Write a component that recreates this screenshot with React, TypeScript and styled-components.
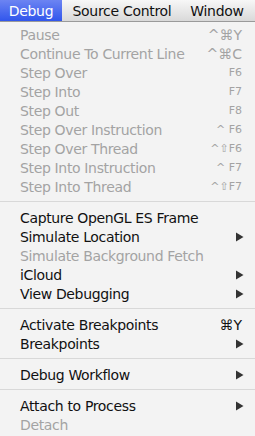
import React from "react";
import styled, { createGlobalStyle } from "styled-components";

const Global = createGlobalStyle`
  html, body { margin: 0; padding: 0; background: #f4f4f4; }
  body { font-family: "DejaVu Sans", "Liberation Sans", sans-serif; }
`;

const Wrap = styled.div`
  width: 255px;
  height: 436px;
  overflow: hidden;
  background: #f3f3f3;
  display: flex;
  flex-direction: column;
`;

const MenuBar = styled.div`
  height: 22px;
  display: flex;
  align-items: stretch;
  background: linear-gradient(#f7f7f7, #d9d9d9);
  border-bottom: 1px solid #9a9a9a;
  box-sizing: border-box;
`;

const BarItem = styled.div<{ $active?: boolean; $w: number }>`
  width: ${(p) => p.$w}px;
  display: flex;
  align-items: center;
  justify-content: center;
  font-size: 14px;
  letter-spacing: -0.3px;
  color: ${(p) => (p.$active ? "#fff" : "#111")};
  background: ${(p) => (p.$active ? "linear-gradient(#6c84f2, #3156ec)" : "transparent")};
`;

const Menu = styled.div`
  display: flex;
  flex-direction: column;
  padding-top: 3px;
`;

const Row = styled.div<{ $disabled?: boolean }>`
  height: 19px;
  display: flex;
  align-items: center;
  padding: 0 11px 0 20px;
  font-size: 14px;
  letter-spacing: -0.35px;
  color: ${(p) => (p.$disabled ? "#a3a3a3" : "#111")};
`;

const Label = styled.span`
  flex: 1;
  white-space: nowrap;
`;

const Shortcut = styled.span<{ $small?: boolean }>`
  font-size: ${(p) => (p.$small ? "11px" : "14px")};
  letter-spacing: 0;
  white-space: nowrap;
  margin-right: 2px;
`;

const Sep = styled.div`
  height: 1px;
  background: #d8d8d8;
  margin: 5px 0 6px;
`;

const Arrow = () => (
  <svg width="9" height="10" viewBox="0 0 9 10" style={{ marginRight: 0 }}>
    <path d="M1 0.5 L8.5 5 L1 9.5 Z" fill="#333" />
  </svg>
);

type Item = { label: string; sc?: string; small?: boolean; disabled?: boolean; sub?: boolean } | "sep";

const items: Item[] = [
  { label: "Pause", sc: "^⌘Y", disabled: true },
  { label: "Continue To Current Line", sc: "^⌘C", disabled: true },
  { label: "Step Over", sc: "F6", small: true, disabled: true },
  { label: "Step Into", sc: "F7", small: true, disabled: true },
  { label: "Step Out", sc: "F8", small: true, disabled: true },
  { label: "Step Over Instruction", sc: "^ F6", small: true, disabled: true },
  { label: "Step Over Thread", sc: "^⇧F6", small: true, disabled: true },
  { label: "Step Into Instruction", sc: "^ F7", small: true, disabled: true },
  { label: "Step Into Thread", sc: "^⇧F7", small: true, disabled: true },
  "sep",
  { label: "Capture OpenGL ES Frame" },
  { label: "Simulate Location", sub: true },
  { label: "Simulate Background Fetch", disabled: true },
  { label: "iCloud", sub: true },
  { label: "View Debugging", sub: true },
  "sep",
  { label: "Activate Breakpoints", sc: "⌘Y" },
  { label: "Breakpoints", sub: true },
  "sep",
  { label: "Debug Workflow", sub: true },
  "sep",
  { label: "Attach to Process", sub: true },
  { label: "Detach", disabled: true },
];

export default function App() {
  return (
    <Wrap>
      <Global />
      <MenuBar>
        <BarItem $active $w={62}>Debug</BarItem>
        <BarItem $w={120}>Source Control</BarItem>
        <BarItem $w={70}>Window</BarItem>
      </MenuBar>
      <Menu>
        {items.map((it, i) =>
          it === "sep" ? (
            <Sep key={i} />
          ) : (
            <Row key={i} $disabled={it.disabled}>
              <Label>{it.label}</Label>
              {it.sc && <Shortcut $small={it.small}>{it.sc}</Shortcut>}
              {it.sub && <Arrow />}
            </Row>
          )
        )}
      </Menu>
    </Wrap>
  );
}
